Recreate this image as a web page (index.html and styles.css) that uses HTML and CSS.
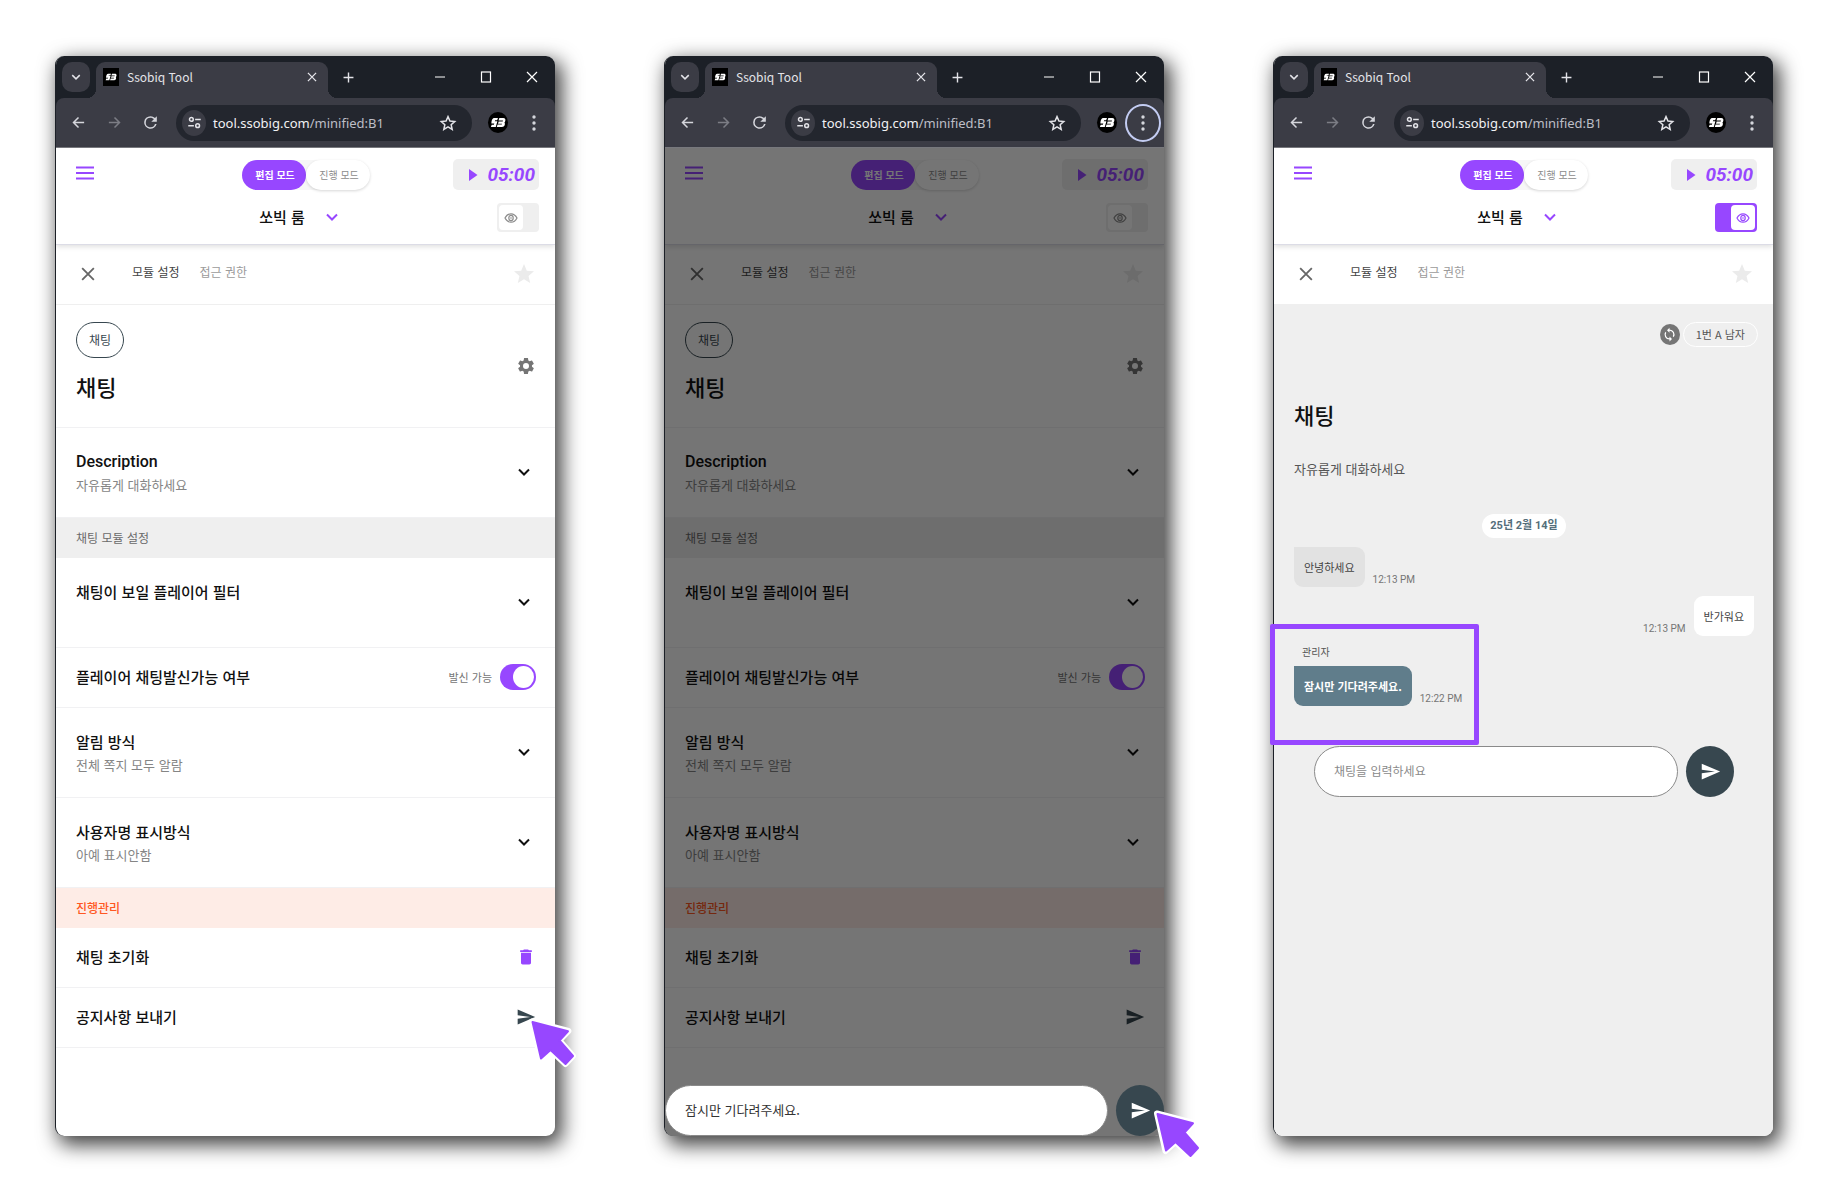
FILE: index.html
```html
<!DOCTYPE html>
<html lang="ko">
<head>
<meta charset="utf-8">
<meta name="viewport" content="width=device-width, initial-scale=1">
<title>Ssobiq Tool</title>
<link rel="stylesheet" href="styles.css">
</head>
<body>
<svg class="sprite" aria-hidden="true">
  <symbol id="i-down" viewBox="0 0 24 24"><path d="M7 9.500l5 5 5-5" fill="none" stroke="currentColor" stroke-width="2"/></symbol>
  <symbol id="i-x" viewBox="0 0 24 24"><path d="M5 5l14 14M19 5L5 19" fill="none" stroke="currentColor" stroke-width="2.200"/></symbol>
  <symbol id="i-plus" viewBox="0 0 24 24"><path d="M12 5v14M5 12h14" fill="none" stroke="currentColor" stroke-width="2"/></symbol>
  <symbol id="i-min" viewBox="0 0 12 12"><path d="M1 6h10" stroke="currentColor" stroke-width="1"/></symbol>
  <symbol id="i-max" viewBox="0 0 12 12"><rect x="1.500" y="1" width="9" height="10" fill="none" stroke="currentColor" stroke-width="1.200"/></symbol>
  <symbol id="i-close" viewBox="0 0 12 12"><path d="M1 1l10 10M11 1L1 11" stroke="currentColor" stroke-width="1.200"/></symbol>
  <symbol id="i-back" viewBox="0 0 24 24"><path d="M21 12H4M12 4l-8 8 8 8" fill="none" stroke="currentColor" stroke-width="2.400"/></symbol>
  <symbol id="i-fwd" viewBox="0 0 24 24"><path d="M3 12h17M12 4l8 8-8 8" fill="none" stroke="currentColor" stroke-width="2.400"/></symbol>
  <symbol id="i-reload" viewBox="0 0 24 24"><path d="M17.650 6.350A7.960 7.960 0 0 0 12 4a8 8 0 1 0 7.730 10h-2.080A6 6 0 1 1 12 6c1.660 0 3.140.690 4.220 1.780L13 11h7V4z" fill="currentColor"/></symbol>
  <symbol id="i-tune" viewBox="0 0 24 24"><g fill="none" stroke="currentColor" stroke-width="2.400"><circle cx="7" cy="7" r="3"/><path d="M13 7h9M2 17h9"/><circle cx="17" cy="17" r="3"/></g></symbol>
  <symbol id="i-bookmark" viewBox="0 0 24 24"><path d="M12 3.500l2.600 5.900 6.400.600-4.800 4.300 1.400 6.200-5.600-3.300-5.600 3.300 1.400-6.200L3 10l6.400-.600z" fill="none" stroke="currentColor" stroke-width="2"/></symbol>
  <symbol id="i-star" viewBox="0 0 24 24"><path d="M12 17.270L18.180 21l-1.640-7.030L22 9.240l-7.190-.610L12 2 9.190 8.630 2 9.240l5.460 4.730L5.820 21z" fill="currentColor"/></symbol>
  <symbol id="i-dots" viewBox="0 0 4 16"><g fill="currentColor"><circle cx="2" cy="2" r="1.700"/><circle cx="2" cy="8" r="1.700"/><circle cx="2" cy="14" r="1.700"/></g></symbol>
  <symbol id="i-logo" viewBox="0 0 18 12"><path d="M5 1h4L8 3.600H5.800l-.4 1H8.300L6.500 11H1l.9-2.600h2.500l.4-1.200H1.600C1.600 4 2.500 1 5 1zM10.500 1H15c3 0 2.800 3.800 1.200 5C17.500 7.500 16.500 11 13.500 11H7.600l.9-2.700h4.700l.3-1H9l.7-2.500h4.600l.3-1H9.600z" fill="#fff"/></symbol>
  <symbol id="i-menu" viewBox="0 0 18 14"><path d="M0 1.500h18M0 7h18M0 12.500h18" stroke="currentColor" stroke-width="2"/></symbol>
  <symbol id="i-play" viewBox="0 0 10 12"><path d="M1 0l8.500 6L1 12z" fill="currentColor"/></symbol>
  <symbol id="i-eye" viewBox="0 0 14 12"><g fill="none" stroke="currentColor" stroke-width="1.200"><path d="M1 6c1.500-3 3.500-4.200 6-4.200S11.500 3 13 6c-1.500 3-3.500 4.200-6 4.200S2.500 9 1 6z"/><ellipse cx="7" cy="6" rx="2.200" ry="2.700"/></g><circle cx="7" cy="6" r=".800" fill="currentColor"/></symbol>
  <symbol id="i-gear" viewBox="0 0 24 24"><path d="M19.140 12.940c.04-.3.060-.610.060-.940 0-.320-.020-.640-.070-.940l2.030-1.580c.180-.140.230-.410.120-.610l-1.920-3.320c-.120-.220-.370-.290-.590-.220l-2.390.960c-.5-.380-1.030-.700-1.620-.940l-.360-2.540c-.04-.240-.240-.410-.480-.410h-3.840c-.240 0-.430.170-.470.410l-.360 2.540c-.590.240-1.130.570-1.620.940l-2.390-.960c-.220-.080-.470 0-.590.220L2.740 8.870c-.120.210-.080.470.120.610l2.030 1.580c-.050.3-.090.630-.090.940s.020.640.070.940l-2.030 1.580c-.180.140-.230.410-.120.610l1.920 3.320c.120.220.370.290.590.220l2.390-.960c.5.380 1.030.700 1.620.940l.360 2.540c.050.240.240.410.480.410h3.840c.240 0 .440-.170.470-.410l.360-2.540c.590-.240 1.130-.560 1.620-.940l2.390.960c.220.080.470 0 .590-.220l1.920-3.320c.120-.220.070-.470-.120-.610zM12 15.600A3.600 3.600 0 1 1 12 8.400a3.600 3.600 0 0 1 0 7.200z" fill="currentColor"/></symbol>
  <symbol id="i-trash" viewBox="0 0 24 24"><path d="M6 19c0 1.100.9 2 2 2h8c1.100 0 2-.9 2-2V7H6zM19 4h-3.500l-1-1h-5l-1 1H5v2h14z" fill="currentColor"/></symbol>
  <symbol id="i-send" viewBox="0 0 24 24"><path d="M2 21l21-9L2 3v7l15 2-15 2z" fill="currentColor"/></symbol>
  <symbol id="i-sync" viewBox="0 0 24 24"><path d="M12 4V1L8 5l4 4V6a6 6 0 0 1 5.250 8.900l1.460 1.460A8 8 0 0 0 12 4zm0 14a6 6 0 0 1-5.250-8.900L5.290 7.640A8 8 0 0 0 12 20v3l4-4-4-4z" fill="currentColor"/></symbol>
  <symbol id="i-cursor" viewBox="0 0 50 50"><path d="M3 3.500L39.500 13l-9 9.500L44 38l-7.500 8-15-14-10 9z" fill="#fff" stroke="#fff" stroke-width="6" stroke-linejoin="round"/><path d="M3.500 4L39 13.300l-8.500 9.200L44 38l-7.500 8-15-14-9.500 8.500z" fill="#9747ff" stroke="#9747ff" stroke-width="2" stroke-linejoin="round"/></symbol>
</svg>

<main class="board">

  <section class="phone">
    <div class="window">
      <header class="chrome">
        <div class="tabstrip">
          <button class="tab-list" aria-label="탭 검색"><svg><use href="#i-down"/></svg></button>
          <div class="tab">
            <span class="favicon"><svg><use href="#i-logo"/></svg></span>
            <span class="tab-title">Ssobiq Tool</span>
            <button class="tab-close" aria-label="탭 닫기"><svg><use href="#i-x"/></svg></button>
          </div>
          <button class="new-tab" aria-label="새 탭"><svg><use href="#i-plus"/></svg></button>
          <button class="win-btn" aria-label="최소화"><svg><use href="#i-min"/></svg></button>
          <button class="win-btn" aria-label="최대화"><svg><use href="#i-max"/></svg></button>
          <button class="win-btn" aria-label="닫기"><svg><use href="#i-close"/></svg></button>
        </div>
        <div class="toolbar">
          <button class="nav-btn" aria-label="뒤로"><svg><use href="#i-back"/></svg></button>
          <button class="nav-btn nav-off" aria-label="앞으로"><svg><use href="#i-fwd"/></svg></button>
          <button class="nav-btn" aria-label="새로고침"><svg class="reload"><use href="#i-reload"/></svg></button>
          <div class="address">
            <button class="site-info" aria-label="사이트 정보"><svg><use href="#i-tune"/></svg></button>
            <span class="url">tool.ssobig.com<span class="path">/minified:B1</span></span>
            <button class="bookmark" aria-label="북마크"><svg><use href="#i-bookmark"/></svg></button>
          </div>
          <button class="nav-btn" aria-label="프로필"><span class="avatar"><svg><use href="#i-logo"/></svg></span></button>
          <button class="nav-btn" aria-label="메뉴"><svg class="dots"><use href="#i-dots"/></svg></button>
        </div>
      </header>
      <div class="page">
        <header class="app-header">
          <button class="menu" aria-label="메뉴 열기"><svg><use href="#i-menu"/></svg></button>
          <div class="modes"><button class="mode mode-on">편집 모드</button><button class="mode">진행 모드</button></div>
          <button class="timer"><svg><use href="#i-play"/></svg><span>05:00</span></button>
          <button class="room">쏘빅 룸<svg><use href="#i-down"/></svg></button>
          <label class="eye"><input type="checkbox" aria-label="미리보기"><span class="eye-thumb"><svg><use href="#i-eye"/></svg></span></label>
        </header>
        <nav class="module-nav">
          <button class="module-close" aria-label="닫기"><svg><use href="#i-x"/></svg></button>
          <a class="current" href="#settings">모듈 설정</a>
          <a href="#access">접근 권한</a>
          <button class="favorite" aria-label="즐겨찾기"><svg><use href="#i-star"/></svg></button>
        </nav>
        <div class="module-head">
          <div class="module-name"><span class="chip">채팅</span><h1>채팅</h1></div>
          <button class="icon-btn gear" aria-label="설정"><svg><use href="#i-gear"/></svg></button>
        </div>
        <div class="row tall">
          <div class="row-text"><h2 class="latin">Description</h2><p>자유롭게 대화하세요</p></div>
          <button class="expand" aria-label="펼치기"><svg><use href="#i-down"/></svg></button>
        </div>
        <h3 class="band">채팅 모듈 설정</h3>
        <div class="row tall">
          <div class="row-text"><h2>채팅이 보일 플레이어 필터</h2></div>
          <button class="expand" aria-label="펼치기"><svg><use href="#i-down"/></svg></button>
        </div>
        <div class="row">
          <h2>플레이어 채팅발신가능 여부</h2>
          <label class="switch">발신 가능<input type="checkbox" checked></label>
        </div>
        <div class="row tall">
          <div class="row-text"><h2>알림 방식</h2><p>전체 쪽지 모두 알람</p></div>
          <button class="expand" aria-label="펼치기"><svg><use href="#i-down"/></svg></button>
        </div>
        <div class="row tall">
          <div class="row-text"><h2>사용자명 표시방식</h2><p>아예 표시안함</p></div>
          <button class="expand" aria-label="펼치기"><svg><use href="#i-down"/></svg></button>
        </div>
        <h3 class="band band-run">진행관리</h3>
        <div class="row">
          <h2>채팅 초기화</h2>
          <button class="icon-btn trash" aria-label="초기화"><svg><use href="#i-trash"/></svg></button>
        </div>
        <div class="row">
          <h2>공지사항 보내기</h2>
          <button class="icon-btn send" aria-label="보내기"><svg><use href="#i-send"/></svg></button>
        </div>
      </div>
    </div>
    <svg class="cursor cursor-notice" aria-hidden="true"><use href="#i-cursor"/></svg>
  </section>

  <section class="phone">
    <div class="window">
      <header class="chrome">
        <div class="tabstrip">
          <button class="tab-list" aria-label="탭 검색"><svg><use href="#i-down"/></svg></button>
          <div class="tab">
            <span class="favicon"><svg><use href="#i-logo"/></svg></span>
            <span class="tab-title">Ssobiq Tool</span>
            <button class="tab-close" aria-label="탭 닫기"><svg><use href="#i-x"/></svg></button>
          </div>
          <button class="new-tab" aria-label="새 탭"><svg><use href="#i-plus"/></svg></button>
          <button class="win-btn" aria-label="최소화"><svg><use href="#i-min"/></svg></button>
          <button class="win-btn" aria-label="최대화"><svg><use href="#i-max"/></svg></button>
          <button class="win-btn" aria-label="닫기"><svg><use href="#i-close"/></svg></button>
        </div>
        <div class="toolbar">
          <button class="nav-btn" aria-label="뒤로"><svg><use href="#i-back"/></svg></button>
          <button class="nav-btn nav-off" aria-label="앞으로"><svg><use href="#i-fwd"/></svg></button>
          <button class="nav-btn" aria-label="새로고침"><svg class="reload"><use href="#i-reload"/></svg></button>
          <div class="address">
            <button class="site-info" aria-label="사이트 정보"><svg><use href="#i-tune"/></svg></button>
            <span class="url">tool.ssobig.com<span class="path">/minified:B1</span></span>
            <button class="bookmark" aria-label="북마크"><svg><use href="#i-bookmark"/></svg></button>
          </div>
          <button class="nav-btn" aria-label="프로필"><span class="avatar"><svg><use href="#i-logo"/></svg></span></button>
          <button class="nav-btn ring" aria-label="메뉴"><svg class="dots"><use href="#i-dots"/></svg></button>
        </div>
      </header>
      <div class="page">
        <header class="app-header">
          <button class="menu" aria-label="메뉴 열기"><svg><use href="#i-menu"/></svg></button>
          <div class="modes"><button class="mode mode-on">편집 모드</button><button class="mode">진행 모드</button></div>
          <button class="timer"><svg><use href="#i-play"/></svg><span>05:00</span></button>
          <button class="room">쏘빅 룸<svg><use href="#i-down"/></svg></button>
          <label class="eye"><input type="checkbox" aria-label="미리보기"><span class="eye-thumb"><svg><use href="#i-eye"/></svg></span></label>
        </header>
        <nav class="module-nav">
          <button class="module-close" aria-label="닫기"><svg><use href="#i-x"/></svg></button>
          <a class="current" href="#settings">모듈 설정</a>
          <a href="#access">접근 권한</a>
          <button class="favorite" aria-label="즐겨찾기"><svg><use href="#i-star"/></svg></button>
        </nav>
        <div class="module-head">
          <div class="module-name"><span class="chip">채팅</span><h1>채팅</h1></div>
          <button class="icon-btn gear" aria-label="설정"><svg><use href="#i-gear"/></svg></button>
        </div>
        <div class="row tall">
          <div class="row-text"><h2 class="latin">Description</h2><p>자유롭게 대화하세요</p></div>
          <button class="expand" aria-label="펼치기"><svg><use href="#i-down"/></svg></button>
        </div>
        <h3 class="band">채팅 모듈 설정</h3>
        <div class="row tall">
          <div class="row-text"><h2>채팅이 보일 플레이어 필터</h2></div>
          <button class="expand" aria-label="펼치기"><svg><use href="#i-down"/></svg></button>
        </div>
        <div class="row">
          <h2>플레이어 채팅발신가능 여부</h2>
          <label class="switch">발신 가능<input type="checkbox" checked></label>
        </div>
        <div class="row tall">
          <div class="row-text"><h2>알림 방식</h2><p>전체 쪽지 모두 알람</p></div>
          <button class="expand" aria-label="펼치기"><svg><use href="#i-down"/></svg></button>
        </div>
        <div class="row tall">
          <div class="row-text"><h2>사용자명 표시방식</h2><p>아예 표시안함</p></div>
          <button class="expand" aria-label="펼치기"><svg><use href="#i-down"/></svg></button>
        </div>
        <h3 class="band band-run">진행관리</h3>
        <div class="row">
          <h2>채팅 초기화</h2>
          <button class="icon-btn trash" aria-label="초기화"><svg><use href="#i-trash"/></svg></button>
        </div>
        <div class="row">
          <h2>공지사항 보내기</h2>
          <button class="icon-btn send" aria-label="보내기"><svg><use href="#i-send"/></svg></button>
        </div>
        <div class="scrim">
          <form class="composer">
            <input type="text" value="잠시만 기다려주세요." aria-label="공지사항">
            <button type="button" aria-label="보내기"><svg><use href="#i-send"/></svg></button>
          </form>
        </div>
      </div>
    </div>
    <svg class="cursor cursor-submit" aria-hidden="true"><use href="#i-cursor"/></svg>
  </section>

  <section class="phone">
    <div class="window">
      <header class="chrome">
        <div class="tabstrip">
          <button class="tab-list" aria-label="탭 검색"><svg><use href="#i-down"/></svg></button>
          <div class="tab">
            <span class="favicon"><svg><use href="#i-logo"/></svg></span>
            <span class="tab-title">Ssobiq Tool</span>
            <button class="tab-close" aria-label="탭 닫기"><svg><use href="#i-x"/></svg></button>
          </div>
          <button class="new-tab" aria-label="새 탭"><svg><use href="#i-plus"/></svg></button>
          <button class="win-btn" aria-label="최소화"><svg><use href="#i-min"/></svg></button>
          <button class="win-btn" aria-label="최대화"><svg><use href="#i-max"/></svg></button>
          <button class="win-btn" aria-label="닫기"><svg><use href="#i-close"/></svg></button>
        </div>
        <div class="toolbar">
          <button class="nav-btn" aria-label="뒤로"><svg><use href="#i-back"/></svg></button>
          <button class="nav-btn nav-off" aria-label="앞으로"><svg><use href="#i-fwd"/></svg></button>
          <button class="nav-btn" aria-label="새로고침"><svg class="reload"><use href="#i-reload"/></svg></button>
          <div class="address">
            <button class="site-info" aria-label="사이트 정보"><svg><use href="#i-tune"/></svg></button>
            <span class="url">tool.ssobig.com<span class="path">/minified:B1</span></span>
            <button class="bookmark" aria-label="북마크"><svg><use href="#i-bookmark"/></svg></button>
          </div>
          <button class="nav-btn" aria-label="프로필"><span class="avatar"><svg><use href="#i-logo"/></svg></span></button>
          <button class="nav-btn" aria-label="메뉴"><svg class="dots"><use href="#i-dots"/></svg></button>
        </div>
      </header>
      <div class="page">
        <header class="app-header">
          <button class="menu" aria-label="메뉴 열기"><svg><use href="#i-menu"/></svg></button>
          <div class="modes"><button class="mode mode-on">편집 모드</button><button class="mode">진행 모드</button></div>
          <button class="timer"><svg><use href="#i-play"/></svg><span>05:00</span></button>
          <button class="room">쏘빅 룸<svg><use href="#i-down"/></svg></button>
          <label class="eye eye-on"><input type="checkbox" aria-label="미리보기" checked><span class="eye-thumb"><svg><use href="#i-eye"/></svg></span></label>
        </header>
        <nav class="module-nav">
          <button class="module-close" aria-label="닫기"><svg><use href="#i-x"/></svg></button>
          <a class="current" href="#settings">모듈 설정</a>
          <a href="#access">접근 권한</a>
          <button class="favorite" aria-label="즐겨찾기"><svg><use href="#i-star"/></svg></button>
        </nav>
        <div class="chat">
          <div class="role">
            <button class="role-switch" aria-label="역할 바꾸기"><svg><use href="#i-sync"/></svg></button>
            <span class="role-name">1번 A 남자</span>
          </div>
          <h1>채팅</h1>
          <p class="chat-desc">자유롭게 대화하세요</p>
          <time class="date">25년 2월 14일</time>
          <div class="message"><p class="bubble">안녕하세요</p><time>12:13 PM</time></div>
          <div class="message mine"><p class="bubble">반가워요</p><time>12:13 PM</time></div>
          <p class="sender">관리자</p>
          <div class="message admin"><p class="bubble">잠시만 기다려주세요.</p><time>12:22 PM</time></div>
          <form class="composer">
            <input type="text" placeholder="채팅을 입력하세요" aria-label="채팅">
            <button type="button" aria-label="보내기"><svg><use href="#i-send"/></svg></button>
          </form>
        </div>
      </div>
    </div>
    <div class="highlight"></div>
  </section>

</main>
</body>
</html>
```
FILE: styles.css
```css
:root {
  --purple: #9747ff;
  --slate: #37474f;
  --line: #f1f1f3;
  --grey: #efefef;
  --strip: #1c2027;
  --toolbar: #3b3c45;
}

* { box-sizing: border-box; }

body {
  margin: 0;
  background: #fff;
  color: #111;
  font-family: "Noto Sans CJK KR", sans-serif;
  font-size: 13px;
  line-height: 20px;
}

h1, h2, h3, p { margin: 0; }
svg { display: block; flex: none; }

button {
  display: flex;
  align-items: center;
  justify-content: center;
  flex: none;
  margin: 0;
  padding: 0;
  border: 0;
  background: none;
  color: inherit;
  font: inherit;
}

a { color: inherit; text-decoration: none; }
.sprite { position: absolute; width: 0; height: 0; }

.board {
  display: grid;
  grid-template-columns: repeat(3, 1fr);
  gap: 109px;
  min-height: 100vh;
  padding: 56px 55px;
}

.phone { position: relative; display: flex; min-width: 0; }

.window {
  display: flex;
  flex: 1;
  flex-direction: column;
  min-width: 0;
  overflow: hidden;
  border-left: 1px solid var(--strip);
  border-radius: 9px;
  background: #fff;
  box-shadow: 5px 7px 20px 2px rgba(0, 0, 0, .75);
}

/* browser frame */
.chrome { background: var(--strip); color: #e3e3e8; }

.tabstrip { display: flex; align-items: center; height: 42px; padding-left: 6px; }

.tab-list {
  width: 28px;
  height: 30px;
  border-radius: 10px;
  background: var(--toolbar);
}
.tab-list svg { width: 18px; height: 18px; }

.tab {
  position: relative;
  display: flex;
  flex: 1;
  align-items: center;
  align-self: flex-end;
  height: 36px;
  margin-left: 6px;
  padding: 0 8px 6px 7px;
  border-radius: 9px 9px 0 0;
  background: var(--toolbar);
}
.tab::before,
.tab::after {
  content: "";
  position: absolute;
  bottom: 0;
  width: 9px;
  height: 9px;
}
.tab::before { right: 100%; background: radial-gradient(circle at 0 0, transparent 9px, var(--toolbar) 9px); }
.tab::after { left: 100%; background: radial-gradient(circle at 100% 0, transparent 9px, var(--toolbar) 9px); }

.favicon {
  display: flex;
  align-items: center;
  justify-content: center;
  width: 16px;
  height: 18px;
  background: #000;
}
.favicon svg { width: 12px; height: 8px; }

.tab-title {
  flex: 1;
  margin-left: 8px;
  font-size: 12px;
  line-height: 18px;
}
.tab-close { width: 16px; height: 16px; }
.tab-close svg { width: 14px; height: 14px; }
.new-tab { width: 40px; height: 36px; margin-right: 49px; }
.new-tab svg { width: 17px; height: 17px; }
.win-btn { width: 46px; height: 36px; color: #fff; }
.win-btn svg { width: 12px; height: 12px; }

.toolbar {
  display: flex;
  align-items: center;
  height: 50px;
  padding: 0 3px 0 4px;
  border-bottom: 1px solid #7a7b80;
  border-radius: 8px 8px 0 0;
  background: var(--toolbar);
}
.nav-btn { width: 36px; height: 38px; border-radius: 50%; color: #d5d6dc; }
.nav-btn svg { width: 15px; height: 15px; }
.nav-btn .reload { width: 19px; height: 19px; }
.nav-btn .dots { width: 4px; height: 16px; }
.nav-off { color: #7c7d85; }
.ring { border: 2px solid #c3ccf2; }

.address {
  display: flex;
  flex: 1;
  align-items: center;
  height: 36px;
  margin: 0 8px;
  padding: 0 15px 0 6px;
  border-radius: 18px;
  background: #23262e;
}
.site-info { width: 24px; height: 26px; border-radius: 50%; background: var(--toolbar); }
.site-info svg { width: 15px; height: 15px; }
.url {
  flex: 1;
  margin-left: 7px;
  color: #f1f1f3;
  font: 13px/20px "Noto Sans", sans-serif;
}
.path { color: #bdbec6; }
.bookmark svg { width: 18px; height: 18px; }

.avatar {
  display: flex;
  align-items: center;
  justify-content: center;
  width: 20px;
  height: 21px;
  border-radius: 50%;
  background: #000;
}
.avatar svg { width: 16px; height: 11px; }

/* app header */
.page { position: relative; display: flex; flex: 1; flex-direction: column; }

.app-header {
  position: relative;
  display: grid;
  grid-template-columns: 1fr auto 1fr;
  grid-template-rows: 31px 29px;
  row-gap: 13px;
  align-items: center;
  padding: 11px 16px 12px;
  border-bottom: 1px solid #dcdce6;
  box-shadow: 0 2px 5px rgba(0, 0, 0, .12);
}
.menu { justify-self: start; height: 31px; padding: 0 0 4px 4px; color: var(--purple); }
.menu svg { width: 18px; height: 14px; }

.modes { display: flex; border-radius: 15px; background: #f7f7f7; }
.mode {
  width: 64px;
  height: 30px;
  padding-left: 3px;
  border-radius: 15px;
  background: #fff;
  box-shadow: 0 1px 3px rgba(0, 0, 0, .16);
  color: #8c8c8c;
  font-size: 10px;
}
.mode-on { background: var(--purple); box-shadow: none; color: #fff; font-weight: 700; }

.timer {
  justify-self: end;
  justify-content: flex-end;
  gap: 9px;
  width: 86px;
  height: 31px;
  padding-right: 4px;
  border-radius: 5px;
  background: var(--grey);
  color: var(--purple);
  font: italic bold 19px/31px Roboto, sans-serif;
}
.timer svg { width: 10px; height: 12px; }

.room {
  grid-column: 2;
  gap: 15px;
  padding: 0 8px 2px 0;
  font-size: 15px;
  font-weight: 500;
}
.room svg { width: 24px; height: 24px; color: var(--purple); }

.eye {
  display: flex;
  justify-self: end;
  width: 42px;
  height: 29px;
  padding: 2px;
  border-radius: 4px;
  background: var(--grey);
  color: #8c8c8c;
}
.eye input { position: absolute; opacity: 0; }
.eye-thumb {
  display: flex;
  align-items: center;
  justify-content: center;
  width: 24px;
  border-radius: 4px;
  background: #fff;
}
.eye-thumb svg { width: 14px; height: 12px; }
.eye-on { justify-content: flex-end; background: var(--purple); color: var(--purple); }

.module-nav {
  display: flex;
  align-items: center;
  gap: 20px;
  height: 60px;
  padding: 0 19px 2px 22px;
  border-bottom: 1px solid var(--grey);
  color: #9b9b9b;
  font-size: 12px;
}
.module-nav a { padding-bottom: 4px; }
.module-nav .current { color: #444; }
.module-close { margin-right: 14px; color: #666; }
.module-close svg { width: 20px; height: 20px; }
.favorite { margin-left: auto; color: #ebebeb; }
.favorite svg { width: 24px; height: 24px; }

/* settings */
.module-head,
.row {
  display: flex;
  align-items: center;
  justify-content: space-between;
  padding: 0 19px 0 20px;
  border-bottom: 1px solid var(--line);
}
.module-name { padding: 17px 0 26px; }
.chip {
  display: block;
  width: 48px;
  margin-bottom: 13px;
  border: 1px solid var(--slate);
  border-radius: 18px;
  color: var(--slate);
  font-size: 12px;
  line-height: 34px;
  text-align: center;
}
h1 { font-size: 22px; font-weight: 500; line-height: 30px; }
h2 { font-size: 15px; font-weight: 500; line-height: 23px; }
.latin { font-family: Roboto, "Noto Sans CJK KR", sans-serif; font-size: 16px; }

.row { min-height: 60px; padding-bottom: 2px; }
.tall { min-height: 90px; }
.row-text { align-self: flex-start; padding-top: 22px; }
.row p { color: #858585; line-height: 23px; }

.expand svg { width: 24px; height: 24px; }
.icon-btn svg { width: 20px; height: 20px; }
.gear { color: #757575; }
.trash { color: var(--purple); }
.send { color: var(--slate); }

.band {
  padding: 0 20px;
  background: var(--grey);
  color: #6a6a6a;
  font-size: 12px;
  font-weight: 400;
  line-height: 40px;
}
.band-run { background: #feece6; color: #ff5722; font-weight: 500; }

.switch { display: flex; align-items: center; gap: 8px; color: #757575; font-size: 11px; }
.switch input {
  display: flex;
  justify-content: flex-end;
  appearance: none;
  width: 36px;
  height: 26px;
  margin: 0;
  padding: 2px;
  border-radius: 13px;
  background: var(--purple);
}
.switch input::before { content: ""; width: 21px; border-radius: 50%; background: #fff; }

.scrim {
  position: absolute;
  inset: 0;
  display: flex;
  flex-direction: column;
  justify-content: flex-end;
  background: rgba(0, 0, 0, .54);
}

.composer { display: flex; gap: 8px; }
.composer input {
  flex: 1;
  min-width: 0;
  height: 51px;
  padding: 0 19px 2px;
  border: 1px solid #8a8a8a;
  border-radius: 26px;
  background: #fff;
  color: #333;
  font: inherit;
}
.composer input::placeholder { color: #8a8a8a; font-size: 12px; opacity: 1; }
.composer button {
  width: 48px;
  height: 51px;
  border-radius: 50%;
  background: var(--slate);
  color: #fff;
}
.composer svg { width: 21px; height: 21px; }

/* chat preview */
.chat { flex: 1; padding: 17px 19px 20px 20px; background: var(--grey); }
.role { display: flex; align-items: center; justify-content: flex-end; gap: 3px; margin: 0 -4px 52px 0; }
.role-switch { width: 20px; height: 21px; border-radius: 50%; background: #757575; color: #fff; }
.role-switch svg { width: 15px; height: 15px; }
.role-name {
  padding: 0 12px;
  border: 1px solid #fff;
  border-radius: 13px;
  color: #555;
  font-size: 11px;
  line-height: 23px;
}
.chat-desc { margin-top: 30px; color: #555; }
.date {
  display: block;
  width: fit-content;
  margin: 35px auto 0;
  padding: 0 8px;
  border-radius: 12px;
  background: #fff;
  color: #546e7a;
  font: bold 11px/24px Roboto, "Noto Sans CJK KR", sans-serif;
}
.message { display: flex; align-items: flex-end; gap: 8px; margin-top: 9px; }
.message time { margin-bottom: 1px; color: #757575; font: 10px/12px Roboto, sans-serif; }
.bubble {
  padding: 0 10px;
  border-radius: 0 9px 9px 9px;
  background: #e2e2e2;
  color: #444;
  font-size: 11px;
  line-height: 40px;
}
.mine { flex-direction: row-reverse; }
.mine .bubble { border-radius: 9px 0 9px 9px; background: #fff; }
.sender { margin: 9px 0 0 8px; color: #555; font-size: 10px; line-height: 14px; }
.admin { margin-top: 7px; }
.admin .bubble { background: #607d8b; color: #fff; font-weight: 700; }
.chat .composer { margin: 40px 20px 0; }

/* annotations laid over the windows */
.highlight {
  position: absolute;
  top: 568px;
  left: -3px;
  width: 209px;
  height: 121px;
  border: 5px solid var(--purple);
  border-radius: 2px;
}
.cursor { position: absolute; width: 50px; height: 50px; overflow: visible; }
.cursor-notice { top: 962px; right: -24px; }
.cursor-submit { right: -40px; bottom: -24px; }
```
